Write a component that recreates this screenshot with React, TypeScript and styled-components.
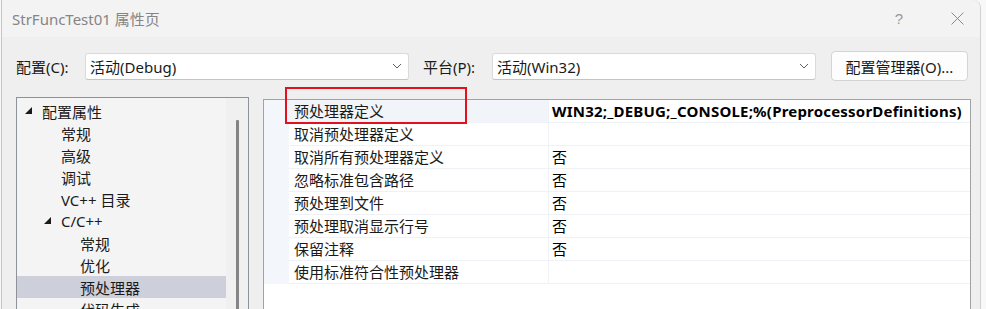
import React from 'react';
import styled, { createGlobalStyle } from 'styled-components';

const GlobalStyle = createGlobalStyle`
  html, body {
    margin: 0;
    padding: 0;
    background: #f8f8f8;
    overflow: hidden;
  }
  body {
    font-family: 'Noto Sans', 'Noto Sans CJK SC', sans-serif;
    font-size: 15px;
    color: #1a1a1a;
  }
`;

interface ITreeItem {
  label: string;
  level: number;
  expanded?: boolean;
  selected?: boolean;
}

const treeItems: ITreeItem[] = [
  { label: '配置属性', level: 0, expanded: true },
  { label: '常规', level: 1 },
  { label: '高级', level: 1 },
  { label: '调试', level: 1 },
  { label: 'VC++ 目录', level: 1 },
  { label: 'C/C++', level: 1, expanded: true },
  { label: '常规', level: 2 },
  { label: '优化', level: 2 },
  { label: '预处理器', level: 2, selected: true },
  { label: '代码生成', level: 2 },
];

const properties = [
  { name: '预处理器定义', value: 'WIN32;_DEBUG;_CONSOLE;%(PreprocessorDefinitions)', bold: true },
  { name: '取消预处理器定义', value: '' },
  { name: '取消所有预处理器定义', value: '否' },
  { name: '忽略标准包含路径', value: '否' },
  { name: '预处理到文件', value: '否' },
  { name: '预处理取消显示行号', value: '否' },
  { name: '保留注释', value: '否' },
  { name: '使用标准符合性预处理器', value: '' },
];

function Chevron() {
  return (
    <svg width="10" height="6" viewBox="0 0 10 6">
      <path d="M1 1 L5 5 L9 1" fill="none" stroke="#5f5f5f" strokeWidth="1" />
    </svg>
  );
}

function ExpandGlyph() {
  return (
    <svg width="7" height="7" viewBox="0 0 7 7">
      <polygon points="0,7 7,0 7,7" fill="#1a1a1a" />
    </svg>
  );
}

function CloseGlyph() {
  return (
    <svg width="13" height="13" viewBox="0 0 13 13">
      <path d="M0.5 0.5 L12.5 12.5 M12.5 0.5 L0.5 12.5" stroke="#8a8a8a" strokeWidth="1" />
    </svg>
  );
}

export default function App() {
  return (
    <>
      <GlobalStyle />
      <Window>
        <TitleBar>
          <Title>StrFuncTest01 属性页</Title>
          <HelpButton>?</HelpButton>
          <CloseButton>
            <CloseGlyph />
          </CloseButton>
        </TitleBar>

        <Toolbar>
          <Label>配置(C):</Label>
          <Combo>
            <span>活动(Debug)</span>
            <Chevron />
          </Combo>
          <Label $gap>平台(P):</Label>
          <Combo>
            <span>活动(Win32)</span>
            <Chevron />
          </Combo>
          <Button>配置管理器(O)...</Button>
        </Toolbar>

        <Main>
          <TreePanel>
            <TreeList>
              {treeItems.map((item, i) => (
                <TreeRow key={i} $level={item.level} $selected={item.selected}>
                  <Expander>{item.expanded && <ExpandGlyph />}</Expander>
                  {item.label}
                </TreeRow>
              ))}
            </TreeList>
            <ScrollTrack>
              <ScrollThumb />
            </ScrollTrack>
          </TreePanel>

          <Grid>
            {properties.map((p, i) => (
              <GridRow key={i}>
                <Gutter />
                <NameCell $selected={i === 0}>{p.name}</NameCell>
                <ValueCell $bold={p.bold}>{p.value}</ValueCell>
              </GridRow>
            ))}
            <Highlight />
          </Grid>
        </Main>
      </Window>
    </>
  );
}

const Window = styled.div`
  margin-left: 1px;
  width: 978px;
  min-height: 340px;
  background: #efefef;
  border-left: 1px solid #c6c6c6;
  border-right: 1px solid #d2d2d2;
  border-top-right-radius: 8px;
  display: flex;
  flex-direction: column;
  & > * {
    flex-shrink: 0;
  }
`;

const TitleBar = styled.div`
  height: 37px;
  background: #f3f3f3;
  border-top-right-radius: 8px;
  display: flex;
  align-items: center;
  padding-left: 10px;
`;

const Title = styled.div`
  flex: 1;
  color: #858585;
  font-size: 15px;
  margin-top: -1px;
`;

const HelpButton = styled.div`
  width: 46px;
  text-align: center;
  color: #9a9a9a;
  font-size: 15px;
  font-family: 'Liberation Sans', sans-serif;
  margin-right: 12px;
`;

const CloseButton = styled.div`
  width: 46px;
  display: flex;
  justify-content: center;
  margin-top: -1px;
`;

const Toolbar = styled.div`
  display: flex;
  align-items: center;
  height: 30px;
  padding: 14px 0 0 14px;
`;

const Label = styled.div<{ $gap?: boolean }>`
  width: 69px;
  margin-left: ${(p) => (p.$gap ? '14px' : '0')};
  white-space: nowrap;
`;

const Combo = styled.div`
  box-sizing: border-box;
  width: 324px;
  height: 27px;
  background: #ffffff;
  border: 1px solid #dadada;
  border-bottom-color: #c4c4c4;
  border-radius: 3px;
  display: flex;
  align-items: center;
  justify-content: space-between;
  padding: 0 6px 0 4px;
`;

const Button = styled.div`
  box-sizing: border-box;
  width: 137px;
  height: 30px;
  margin-left: 15px;
  background: #fdfdfd;
  border: 1px solid #d4d4d4;
  border-radius: 4px;
  display: flex;
  align-items: center;
  justify-content: center;
`;

const Main = styled.div`
  display: flex;
  align-items: flex-start;
  padding: 16px 0 0 14px;
`;

const TreePanel = styled.div`
  box-sizing: border-box;
  width: 233px;
  height: 240px;
  border: 1px solid #8e9399;
  background: #f4f4f4;
  display: flex;
  overflow: hidden;
`;

const TreeList = styled.div`
  width: 209px;
  padding-top: 2px;
`;

const TreeRow = styled.div<{ $level: number; $selected?: boolean }>`
  height: 22px;
  display: flex;
  align-items: center;
  padding-left: ${(p) => 8 + p.$level * 19}px;
  background: ${(p) => (p.$selected ? '#cdcfdb' : 'transparent')};
  white-space: nowrap;
`;

const Expander = styled.span`
  width: 17px;
  height: 22px;
  display: flex;
  align-items: center;
  margin-top: -2px;
`;

const ScrollTrack = styled.div`
  flex: 1;
  background: #f0f0f0;
  display: flex;
  justify-content: center;
  padding-top: 22px;
`;

const ScrollThumb = styled.div`
  width: 3px;
  height: 260px;
  border-radius: 1px;
  background: #858585;
`;

const Grid = styled.div`
  position: relative;
  box-sizing: border-box;
  width: 708px;
  height: 240px;
  margin: 2px 0 0 14px;
  border: 1px solid #a3a3a3;
  background: #ffffff;
`;

const GridRow = styled.div`
  display: flex;
  height: 23px;
`;

const Gutter = styled.div`
  width: 25px;
  background: #f3f6fb;
`;

const NameCell = styled.div<{ $selected?: boolean }>`
  box-sizing: border-box;
  width: 260px;
  padding-left: 5px;
  line-height: 22px;
  border-right: 1px solid #eef1f5;
  border-bottom: 1px solid #eef1f5;
  background: ${(p) => (p.$selected ? '#f1f4f9' : '#ffffff')};
  white-space: nowrap;
`;

const ValueCell = styled.div<{ $bold?: boolean }>`
  flex: 1;
  padding-left: 3px;
  line-height: 22px;
  border-bottom: 1px solid #eef1f5;
  font-weight: ${(p) => (p.$bold ? 700 : 400)};
  letter-spacing: ${(p) => (p.$bold ? '0.2px' : '0')};
  color: #000000;
  white-space: nowrap;
`;

const Highlight = styled.div`
  position: absolute;
  left: 21px;
  top: -13px;
  box-sizing: border-box;
  width: 182px;
  height: 37px;
  border: 2px solid #e5101d;
  pointer-events: none;
`;
